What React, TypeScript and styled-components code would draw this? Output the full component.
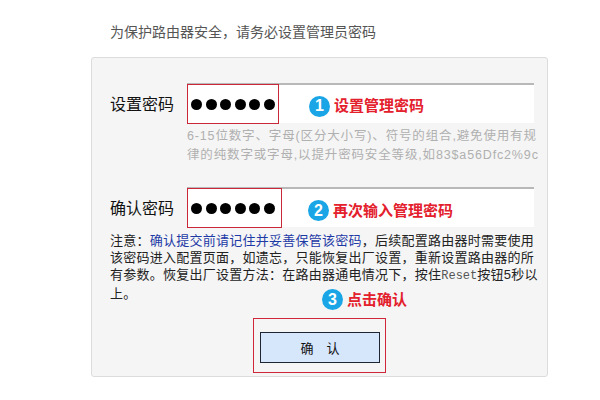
import React from "react";
import styled, { createGlobalStyle } from "styled-components";

const GlobalStyle = createGlobalStyle`
  html, body {
    margin: 0;
    padding: 0;
    background: #fff;
    font-family: "Liberation Sans", "Noto Sans CJK SC", sans-serif;
  }
`;

const Dots = ({ count }: { count: number }) => (
  <DotRow>
    {Array.from({ length: count }).map((_, i) => (
      <Dot key={i} />
    ))}
  </DotRow>
);

const Step = ({ n, text }: { n: number; text: string }) => (
  <StepWrap>
    <StepBadge>{n}</StepBadge>
    <StepText>{text}</StepText>
  </StepWrap>
);

const App: React.FC = () => {
  return (
    <Page>
      <GlobalStyle />
      <Title>为保护路由器安全，请务必设置管理员密码</Title>
      <Panel>
        <Row>
          <Label>设置密码</Label>
          <Field>
            <PassBox $width={92}>
              <Dots count={6} />
            </PassBox>
            <StepSlot $gap={30} $shift={4}>
              <Step n={1} text="设置管理密码" />
            </StepSlot>
          </Field>
        </Row>
        <Hint>
          6-15位数字、字母(区分大小写)、符号的组合,避免使用有规
          <br />
          律的纯数字或字母,以提升密码安全等级,如83$a56Dfc2%9c
        </Hint>
        <Row $top={22}>
          <Label>确认密码</Label>
          <Field>
            <PassBox $width={95}>
              <Dots count={6} />
            </PassBox>
            <StepSlot $gap={26} $shift={5}>
              <Step n={2} text="再次输入管理密码" />
            </StepSlot>
          </Field>
        </Row>
        <Note>
          注意：<NoteLink>确认提交前请记住并妥善保管该密码</NoteLink>，后续配置路由器时需要使用
          <br />
          该密码进入配置页面，如遗忘，只能恢复出厂设置，重新设置路由器的所
          <br />
          有参数。恢复出厂设置方法：在路由器通电情况下，按住<Mono>Reset</Mono>按钮5秒以
          <br />
          上。
        </Note>
        <Actions>
          <RedFrame>
            <ConfirmStep>
              <Step n={3} text="点击确认" />
            </ConfirmStep>
            <ConfirmButton type="button">确　认</ConfirmButton>
          </RedFrame>
        </Actions>
      </Panel>
    </Page>
  );
};

export default App;

// Styled Components
const Page = styled.div`
  width: 600px;
  height: 400px;
  overflow: hidden;
  padding-top: 22px;
  box-sizing: border-box;
`;

const Title = styled.div`
  padding-left: 110px;
  font-size: 14px;
  line-height: 20px;
  color: #555;
`;

const Panel = styled.div`
  margin: 15px 0 0 91px;
  width: 457px;
  height: 320px;
  box-sizing: border-box;
  padding: 25px 13px 0 18px;
  background: #f5f5f5;
  border: 1px solid #dcdcdc;
  border-radius: 3px;
`;

const Row = styled.div<{ $top?: number }>`
  display: flex;
  align-items: stretch;
  height: 40px;
  margin-top: ${(p) => p.$top ?? 0}px;
`;

const Label = styled.div`
  width: 77px;
  display: flex;
  align-items: center;
  font-size: 16px;
  color: #111;
`;

const Field = styled.div`
  flex: 1;
  display: flex;
  align-items: stretch;
  background: #fff;
  border-top: 2px solid #b8b8b8;
  box-sizing: border-box;
`;

const PassBox = styled.div<{ $width: number }>`
  width: ${(p) => p.$width}px;
  box-sizing: border-box;
  border: 1px solid #c8283a;
  margin-top: -1px;
  margin-bottom: -1px;
  display: flex;
  align-items: center;
  padding-left: 3px;
`;

const DotRow = styled.div`
  display: flex;
  gap: 3.5px;
`;

const Dot = styled.span`
  width: 11px;
  height: 11px;
  border-radius: 50%;
  background: #000;
`;

const StepSlot = styled.div<{ $gap: number; $shift: number }>`
  display: flex;
  align-items: center;
  margin-left: ${(p) => p.$gap}px;
  padding-top: ${(p) => p.$shift}px;
`;

const StepWrap = styled.div`
  display: flex;
  align-items: center;
  gap: 4px;
  white-space: nowrap;
`;

const StepBadge = styled.span`
  width: 21px;
  height: 21px;
  border-radius: 50%;
  background: #1aa6e6;
  color: #fff;
  font-size: 16px;
  font-weight: bold;
  display: flex;
  align-items: center;
  justify-content: center;
  line-height: 1;
`;

const StepText = styled.span`
  font-size: 15px;
  font-weight: bold;
  color: #e3202c;
  line-height: 20px;
`;

const Hint = styled.div`
  margin: 4px 0 0 77px;
  font-size: 12.5px;
  letter-spacing: 0.85px;
  line-height: 19px;
  color: #b0b0b0;
  white-space: nowrap;
`;

const Note = styled.div`
  margin-top: 5px;
  font-size: 13px;
  letter-spacing: 0.25px;
  line-height: 17px;
  color: #222;
  white-space: nowrap;
`;

const NoteLink = styled.span`
  color: #1d3aa6;
`;

const Mono = styled.span`
  font-family: "Liberation Mono", monospace;
  color: #555;
  font-size: 12px;
  letter-spacing: 0;
`;

const Actions = styled.div`
  display: flex;
  justify-content: center;
  margin-top: 16px;
  padding-right: 5px;
`;

const RedFrame = styled.div`
  position: relative;
  border: 1px solid #d0263a;
  padding: 13px 5px 9px 6px;
`;

const ConfirmStep = styled.div`
  position: absolute;
  left: 68px;
  top: -30px;
`;

const ConfirmButton = styled.button`
  width: 120px;
  height: 31px;
  background: #d6e6fb;
  border: 1px solid #1d2733;
  font-family: "Liberation Sans", "Noto Sans CJK SC", sans-serif;
  font-size: 13px;
  color: #111;
  padding: 0;
  display: block;
`;
